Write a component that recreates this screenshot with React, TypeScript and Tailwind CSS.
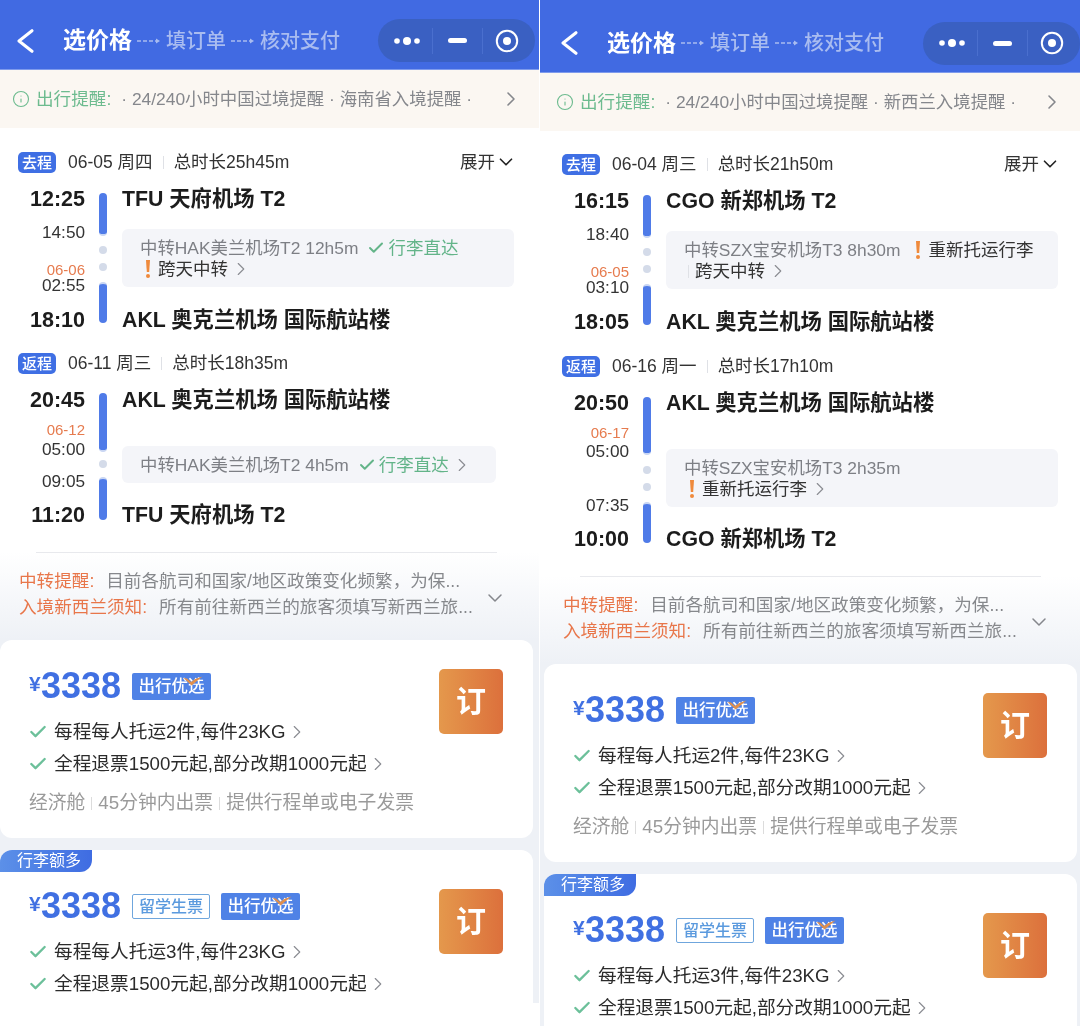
import React from "react";
import { Check, ChevronDown, ChevronRight, Info } from "lucide-react";

type TimeItem = { text: string; kind: "big" | "small" | "date"; cls: string };

const timeKinds = {
  big: "h-[26px] leading-[26px] text-[21.5px] font-bold text-[#1c1c1c]",
  small: "h-[22px] leading-[22px] text-[17.2px] text-[#333]",
  date: "h-[12px] leading-[12px] text-[15px] text-[#e67b4e]",
};

const Bar = ({ cls, cap }: { cls: string; cap: "top" | "bottom" }) => (
  <div className={`w-2 rounded-full bg-[#4f7be8] ${cap === "bottom" ? "border-b-2" : "border-t-2"} border-[#c9d6f3] ${cls}`} />
);
const Dot = ({ cls }: { cls: string }) => <div className={`w-2 h-2 rounded-full bg-[#d4dbe9] ${cls}`} />;
const Title = ({ text, cls = "" }: { text: string; cls?: string }) => (
  <div className={`h-[26px] leading-[26px] text-[21.3px] font-semibold text-[#1c1c1c] whitespace-nowrap ${cls}`}>{text}</div>
);

function Segment({ times, bars, title1, title2, titleCls, box }: {
  times: TimeItem[]; bars: React.ReactNode; title1: string; title2: string; titleCls: string; box: React.ReactNode;
}) {
  return (
    <div className="flex">
      <div className="w-[85px] flex flex-col items-end">
        {times.map((t) => (
          <div key={t.text} className={`${timeKinds[t.kind]} ${t.cls}`}>{t.text}</div>
        ))}
      </div>
      <div className="w-2 ml-[14px] flex flex-col">{bars}</div>
      <div className="ml-[15px] flex flex-col">
        <Title text={title1} />
        {box}
        <Title text={title2} cls={titleCls} />
      </div>
    </div>
  );
}

const Muted = ({ children }: { children: React.ReactNode }) => <span className="text-[#7d7f85] whitespace-nowrap text-[17.4px]">{children}</span>;
const Dark = ({ children }: { children: React.ReactNode }) => <span className="text-[#333] whitespace-nowrap text-[17.5px]">{children}</span>;
const Bang = ({ cls = "" }: { cls?: string }) => (
  <svg className={`shrink-0 ${cls}`} width="10" height="20" viewBox="0 0 10 20" fill="#ef8a3c">
    <path d="M3 1 H7 L6.2 13 H3.8 Z" />
    <circle cx="5" cy="17" r="2" />
  </svg>
);
const Chev = ({ cls = "" }: { cls?: string }) => <ChevronRight size={22} strokeWidth={1.25} className={`text-[#8a8c92] shrink-0 ${cls}`} />;
const Direct = () => (
  <span className="flex items-center text-[#63b489] whitespace-nowrap text-[17.5px]">
    <Check size={18} strokeWidth={2.6} className="mr-[3px]" />行李直达
  </span>
);

const boxCls = "rounded-[6px] bg-[#f4f5f9] pl-[18px] pt-px flex flex-col justify-center leading-[21px]";
const Row = ({ children }: { children: React.ReactNode }) => <div className="flex items-center h-[21px]">{children}</div>;

function TripHead({ label, date, total, expand, cls }: { label: string; date: string; total: string; expand?: boolean; cls: string }) {
  return (
    <div className={`w-[496px] ml-[18px] h-[22px] flex items-center text-[17.5px] text-[#333] ${cls}`}>
      <span className="w-[38px] h-[21px] rounded-[5px] bg-[#3f6fe4] text-white text-[15px] font-medium leading-[21px] text-center">{label}</span>
      <span className="ml-3 whitespace-nowrap">{date}</span>
      <span className="ml-[10px] w-px h-[13px] bg-[#dfe1e6]" />
      <span className="ml-[10px] whitespace-nowrap">{total}</span>
      {expand && (
        <span className="ml-auto flex items-center text-[17.5px]">
          展开<ChevronDown size={22} strokeWidth={1.8} className="text-[#222] -mr-[3px]" />
        </span>
      )}
    </div>
  );
}

const TopTag = () => (
  <span className="relative w-[79px] h-[27px] rounded-[2px] bg-[#4f82e6] text-white text-[16.5px] font-medium leading-[27px] text-center whitespace-nowrap">
    出行优选
    <svg className="absolute left-[51px] top-[3px]" width="20" height="10" viewBox="0 0 20 10">
      <path d="M0.5 2 L4 2.5 L8 6 Q13 2 19.5 0.5 Q14 5 8.5 9.5 Q5 6 0.5 2Z" fill="#e08f4c" />
    </svg>
  </span>
);

const Perk = ({ text }: { text: string }) => (
  <div className="h-8 flex items-center text-[18.7px] text-[#2b2b2b] whitespace-nowrap">
    <Check size={20} strokeWidth={2.8} className="text-[#6cc09a] -ml-px" />
    <span className="ml-[6px]">{text}</span>
    <Chev />
  </div>
);

function PriceCard({ pieces, student, info }: { pieces: number; student?: boolean; info?: boolean }) {
  return (
    <div className={`relative w-[533px] rounded-[12px] bg-white flex justify-between overflow-hidden shrink-0 ${student ? "h-[200px]" : "h-[198px]"}`}>
      <div className="flex flex-col">
        {student && (
          <div className="w-[92px] h-[22px] rounded-br-[12px] bg-gradient-to-r from-[#5c90e8] to-[#3f6ce2] text-white text-[16px] leading-[22px] pl-[17px] whitespace-nowrap">行李额多</div>
        )}
        <div className={`pl-[29px] ${student ? "pt-[13px]" : "pt-[25px]"}`}>
          <div className="h-[42px] flex items-center">
            <span className="text-[#4070e2] text-[21px] font-bold w-3 -mt-1">¥</span>
            <span className="text-[#4070e2] text-[36px] font-bold leading-[42px] w-[91px]">3338</span>
            {student && (
              <span className="w-[78px] h-[25px] mr-[11px] rounded-[2px] border border-[#6fa6dd] text-[#5b9ade] text-[16px] font-medium leading-[23px] text-center whitespace-nowrap">留学生票</span>
            )}
            <TopTag />
          </div>
          <div className="mt-[9px]">
            <Perk text={`每程每人托运${pieces}件,每件23KG`} />
            <Perk text="全程退票1500元起,部分改期1000元起" />
          </div>
          {info && (
            <div className="mt-3 h-[22px] flex items-center text-[18.8px] text-[#9a9a9a] whitespace-nowrap">
              经济舱<span className="mx-[6px] w-px h-[13px] bg-[#dcdcdc]" />45分钟内出票<span className="mx-[6px] w-px h-[13px] bg-[#dcdcdc]" />提供行程单或电子发票
            </div>
          )}
        </div>
      </div>
      <div className={`w-16 h-[65px] mr-[30px] rounded-[5px] bg-gradient-to-r from-[#e4984c] to-[#dc703c] text-white text-[30px] font-semibold leading-[65px] text-center ${student ? "mt-[39px]" : "mt-[29px]"}`}>订</div>
    </div>
  );
}

const DashArrow = () => (
  <svg className="mx-[5px] shrink-0" width="24" height="8" viewBox="0 0 24 8" fill="none" stroke="#a9bcf0" strokeWidth="1.4">
    <path d="M0 4 H19" strokeDasharray="4 2" />
    <path d="M19 1.5 L23 4 L19 6.5" fill="#a9bcf0" stroke="none" />
  </svg>
);

function Header({ shift, heightCls, capsuleCls }: { shift: string; heightCls: string; capsuleCls: string }) {
  return (
    <div className={`${heightCls} bg-[#416ae2] flex items-center ${shift} border-b border-[#7f9bec]`}>
      <svg className="ml-[17px] shrink-0" width="17" height="24" viewBox="0 0 17 24" fill="none" stroke="#fff" strokeWidth="3" strokeLinecap="round" strokeLinejoin="round">
        <path d="M15 1.7 L2 12 L15 22.3" />
      </svg>
      <span className="ml-[29px] text-white text-[23px] font-bold whitespace-nowrap">选价格</span>
      <DashArrow />
      <span className="text-[#a9bcf0] text-[20px] font-medium whitespace-nowrap">填订单</span>
      <DashArrow />
      <span className="text-[#a9bcf0] text-[20px] font-medium whitespace-nowrap">核对支付</span>
      <div className={`ml-auto w-[157px] h-[43px] rounded-full bg-[#3a60c2] flex items-center shrink-0 ${capsuleCls}`}>
        <div className="w-[54px] pl-1 flex justify-center">
          <svg width="26" height="10" viewBox="0 0 26 10" fill="#fff"><circle cx="3" cy="5" r="2.8" /><circle cx="13" cy="5" r="4" /><circle cx="23" cy="5" r="2.8" /></svg>
        </div>
        <span className="w-px h-[26px] bg-[#4a6fce]" />
        <div className="w-[49px] flex justify-center"><span className="w-[19px] h-[5px] rounded-full bg-white" /></div>
        <span className="w-px h-[26px] bg-[#4a6fce]" />
        <div className="w-[52px] pr-1 flex justify-center">
          <svg width="24" height="24" viewBox="0 0 24 24" fill="none"><circle cx="12" cy="12" r="10.2" stroke="#fff" strokeWidth="2" /><circle cx="12" cy="12" r="4" fill="#fff" /></svg>
        </div>
      </div>
    </div>
  );
}

function Reminder({ shift, place }: { shift: string; place: string }) {
  return (
    <div className={`h-[58px] bg-[#fbf7f2] flex items-center ${shift}`}>
      <Info size={18} strokeWidth={1.5} className="ml-[12px] text-[#6dbb8f] shrink-0" />
      <span className="ml-[6px] text-[#6dbb8f] text-[17.6px] whitespace-nowrap">出行提醒:</span>
      <span className="ml-[10px] text-[#85878c] text-[17.4px] whitespace-nowrap">· 24/240小时中国过境提醒 · {place}入境提醒 ·</span>
      <ChevronRight size={24} strokeWidth={1.6} className="text-[#85878c] ml-auto mr-[16px] shrink-0" />
    </div>
  );
}

function Notes() {
  return (
    <div className="h-[88px] w-full flex flex-col">
      <div className="w-[461px] ml-[36px] h-px bg-[#e8e9ed]" />
      <div className="flex items-center mt-[15px] pl-[19px] w-[507px] text-[17.6px] leading-[26px]">
        <div className="whitespace-nowrap">
          <div className="text-[#86888c]"><span className="text-[#e8764a] mr-[12px]">中转提醒:</span>目前各航司和国家/地区政策变化频繁，为保...</div>
          <div className="text-[#86888c]"><span className="text-[#e8764a] mr-[12px]">入境新西兰须知:</span>所有前往新西兰的旅客须填写新西兰旅...</div>
        </div>
        <ChevronDown size={24} strokeWidth={1.5} className="text-[#85878c] ml-auto mt-2 shrink-0" />
      </div>
    </div>
  );
}

const seg1Times = (a: string, b: string, d: string, c: string, e: string): TimeItem[] => [
  { text: a, kind: "big", cls: "" },
  { text: b, kind: "small", cls: "mt-[9px]" },
  { text: d, kind: "date", cls: "mt-[21px]" },
  { text: c, kind: "small", cls: "-mt-[2px]" },
  { text: e, kind: "big", cls: "mt-[11px]" },
];

const seg1Bars = (
  <>
    <Bar cap="bottom" cls="mt-[7px] h-[43px]" />
    <Dot cls="mt-[10px]" />
    <Dot cls="mt-[9px]" />
    <Bar cap="top" cls="mt-[11px] h-[41px]" />
  </>
);

export default function App() {
  return (
    <div className="w-[1080px] h-[1026px] flex bg-white overflow-hidden blur-[0.5px] font-['Liberation_Sans','Noto_Sans_CJK_SC',sans-serif]">
      {/* Left phone */}
      <div className="w-[539px] h-[1003px] overflow-hidden shrink-0 bg-[#eef1f6]">
        <Header shift="pt-3" heightCls="h-[70px]" capsuleCls="mr-[4px]" />
        <Reminder shift="" place="海南省" />
        <div className="bg-white pt-[23px]">
          <TripHead label="去程" date="06-05 周四" total="总时长25h45m" expand cls="" />
          <div className="mt-[13px]">
            <Segment
              times={seg1Times("12:25", "14:50", "06-06", "02:55", "18:10")}
              bars={seg1Bars}
              title1="TFU 天府机场 T2"
              title2="AKL 奥克兰机场 国际航站楼"
              titleCls="mt-5"
              box={
                <div className={`mt-[17px] w-[392px] h-[58px] ${boxCls}`}>
                  <Row><Muted>中转HAK美兰机场T2 12h5m</Muted><span className="ml-[9px]"><Direct /></span></Row>
                  <Row><Bang cls="ml-[3px]" /><span className="ml-[5px]"><Dark>跨天中转</Dark></span><Chev cls="ml-[2px]" /></Row>
                </div>
              }
            />
          </div>
          <TripHead label="返程" date="06-11 周三" total="总时长18h35m" cls="mt-[19px]" />
          <div className="mt-[13px]">
            <Segment
              times={[
                { text: "20:45", kind: "big", cls: "" },
                { text: "06-12", kind: "date", cls: "mt-[11px]" },
                { text: "05:00", kind: "small", cls: "mt-[2px]" },
                { text: "09:05", kind: "small", cls: "mt-[10px]" },
                { text: "11:20", kind: "big", cls: "mt-[10px]" },
              ]}
              bars={
                <>
                  <Bar cap="bottom" cls="mt-[6px] h-[59px]" />
                  <Dot cls="mt-2" />
                  <Bar cap="top" cls="mt-[9px] h-[43px]" />
                </>
              }
              title1="AKL 奥克兰机场 国际航站楼"
              title2="TFU 天府机场 T2"
              titleCls="mt-[19px]"
              box={
                <div className={`mt-[33px] w-[374px] h-[37px] ${boxCls}`}>
                  <Row><Muted>中转HAK美兰机场T2 4h5m</Muted><span className="ml-[9px]"><Direct /></span><Chev cls="ml-[2px]" /></Row>
                </div>
              }
            />
          </div>
          <div className="mt-6 bg-gradient-to-b from-white to-[#eef1f6]">
            <Notes />
          </div>
        </div>
        <div className="flex flex-col gap-3">
          <PriceCard pieces={2} info />
          <PriceCard pieces={3} student />
        </div>
      </div>

      <div className="w-px shrink-0 bg-white" />

      {/* Right phone */}
      <div className="w-[540px] h-[1026px] overflow-hidden shrink-0 bg-[#eef1f6]">
        <Header shift="pl-1 pt-[14px]" heightCls="h-[73px]" capsuleCls="" />
        <Reminder shift="pl-1" place="新西兰" />
        <div className="bg-white pl-1 pt-[22px]">
          <TripHead label="去程" date="06-04 周三" total="总时长21h50m" expand cls="" />
          <div className="mt-[13px]">
            <Segment
              times={seg1Times("16:15", "18:40", "06-05", "03:10", "18:05")}
              bars={seg1Bars}
              title1="CGO 新郑机场 T2"
              title2="AKL 奥克兰机场 国际航站楼"
              titleCls="mt-5"
              box={
                <div className={`mt-[17px] w-[392px] h-[58px] ${boxCls}`}>
                  <Row><Muted>中转SZX宝安机场T3 8h30m</Muted><Bang cls="ml-[13px]" /><span className="ml-[5px]"><Dark>重新托运行李</Dark></span></Row>
                  <Row><span className="ml-1 w-px h-[13px] bg-[#dfe1e6]" /><span className="ml-[6px]"><Dark>跨天中转</Dark></span><Chev cls="ml-[2px]" /></Row>
                </div>
              }
            />
          </div>
          <TripHead label="返程" date="06-16 周一" total="总时长17h10m" cls="mt-5" />
          <div className="mt-[13px]">
            <Segment
              times={[
                { text: "20:50", kind: "big", cls: "" },
                { text: "06-17", kind: "date", cls: "mt-[11px]" },
                { text: "05:00", kind: "small", cls: "mt-px" },
                { text: "07:35", kind: "small", cls: "mt-8" },
                { text: "10:00", kind: "big", cls: "mt-[10px]" },
              ]}
              bars={
                <>
                  <Bar cap="bottom" cls="mt-[7px] h-[58px]" />
                  <Dot cls="mt-[11px]" />
                  <Dot cls="mt-[9px]" />
                  <Bar cap="top" cls="mt-[11px] h-[41px]" />
                </>
              }
              title1="AKL 奥克兰机场 国际航站楼"
              title2="CGO 新郑机场 T2"
              titleCls="mt-[19px]"
              box={
                <div className={`mt-[33px] w-[392px] h-[58px] ${boxCls}`}>
                  <Row><Muted>中转SZX宝安机场T3 2h35m</Muted></Row>
                  <Row><Bang cls="ml-[3px]" /><span className="ml-[5px]"><Dark>重新托运行李</Dark></span><Chev cls="ml-[2px]" /></Row>
                </div>
              }
            />
          </div>
          <div className="mt-6 -ml-1 pl-1 bg-gradient-to-b from-white to-[#eef1f6]">
            <Notes />
          </div>
        </div>
        <div className="flex flex-col gap-3 pl-1">
          <PriceCard pieces={2} info />
          <PriceCard pieces={3} student />
        </div>
      </div>
    </div>
  );
}
